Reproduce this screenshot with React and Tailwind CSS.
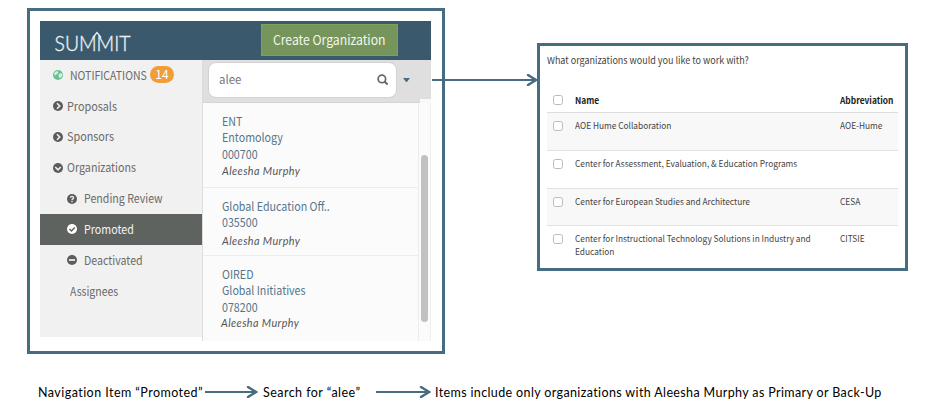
import React from "react";

const sans = "font-['Noto_Sans_CJK_SC','Noto_Sans',sans-serif]";
const caption = "font-['Lato','Liberation_Sans',sans-serif]";

function Disc({ color = "#5a5d5b", className = "", children }) {
  return (
    <svg viewBox="0 0 20 20" className={"size-[10px] shrink-0 " + className}>
      <circle cx="10" cy="10" r="10" fill={color} />
      {children}
    </svg>
  );
}

const chevronRight = <path d="M8 4.500l5.500 5.500-5.500 5.500" fill="none" stroke="#f1f1f1" strokeWidth="3.2" />;
const chevronDown = <path d="M4.500 8l5.500 5.500 5.500-5.500" fill="none" stroke="#f1f1f1" strokeWidth="3.2" />;

function Row({ icon, label, className = "", labelClass = "" }) {
  return (
    <div className={"flex h-[30.8px] items-center " + className}>
      {icon}
      <span className={"origin-left whitespace-nowrap pb-px " + labelClass}>{label}</span>
    </div>
  );
}

function Sidebar() {
  return (
    <nav className="h-[277px] w-[162px] shrink-0 bg-[#f1f1f1] text-[12px] leading-[16px] text-[#6a6a6a]">
      <div className="flex h-[30.8px] items-center pb-px pl-[13px]">
        <Disc color="#6abf93">
          <path d="M4 4l5-2 2 3-3 3-4 3-2-3zM12 8l5-2 2 4-3 5-3 1-2-4z" fill="#d6efe2" />
        </Disc>
        <span className="ml-[7px] w-[78px] origin-left scale-x-[0.875] whitespace-nowrap">NOTIFICATIONS</span>
        <span className="ml-[2px] flex h-[17px] w-[24px] items-center justify-center rounded-full bg-[#f19d38] text-[12px] text-white">
          <span className="pb-px">14</span>
        </span>
      </div>
      <Row icon={<Disc>{chevronRight}</Disc>} label="Proposals" className="pl-[13px]" labelClass="ml-[4px] scale-x-[0.9]" />
      <Row icon={<Disc>{chevronRight}</Disc>} label="Sponsors" className="pl-[13px]" labelClass="ml-[4px] scale-x-[0.9]" />
      <Row icon={<Disc>{chevronDown}</Disc>} label="Organizations" className="pl-[13px]" labelClass="ml-[4px] scale-x-[0.893]" />
      <Row
        icon={<Disc><path d="M6.8 7.500C7 3.800 13.200 4 13.200 7.300 13.200 9.800 10 9.600 10 12M10 13.600V16.400" fill="none" stroke="#f1f1f1" strokeWidth="2.6" /></Disc>}
        label="Pending Review" className="pl-[27px]" labelClass="ml-[7px] scale-x-[0.885]"
      />
      <Row
        icon={<Disc color="#ffffff"><path d="M5 10l4 4 6.500-7" fill="none" stroke="#5f6360" strokeWidth="3" /></Disc>}
        label="Promoted" className="bg-[#5f6360] pl-[27px] text-[#f4f4f4]" labelClass="ml-[7px] scale-x-[0.89]"
      />
      <Row
        icon={<Disc><path d="M4 10H16" stroke="#f1f1f1" strokeWidth="3.4" /></Disc>}
        label="Deactivated" className="pl-[27px]" labelClass="ml-[7px] scale-x-[0.885]"
      />
      <Row label="Assignees" className="pl-[30px] pt-px" labelClass="scale-x-[0.875]" />
    </nav>
  );
}

function Org({ lines, className, personClass = "" }) {
  return (
    <div className={"border-[#ededed] " + className}>
      {lines.map((l) => (
        <div key={l} className="h-[16.4px] whitespace-nowrap text-[12px] leading-[16.4px] text-[#55758a]">
          <span className="inline-block origin-left scale-x-[0.89]">{l}</span>
        </div>
      ))}
      <div className={"whitespace-nowrap font-['Lato','Liberation_Sans',sans-serif] text-[10.8px] italic leading-[16px] tracking-[0.4px] text-[#555] " + personClass}>
        Aleesha Murphy
      </div>
    </div>
  );
}

function SummitApp() {
  return (
    <div className="h-[346px] w-[418px] shrink-0 border-[3px] border-[#466c81] bg-white pl-[10px] pt-[10px]">
      <header className="flex h-[39px] w-[391px] items-center bg-[#3b596c]">
        <svg viewBox="0 0 90 30" className="ml-[8px] h-[30px] w-[90px] text-[#e8f0f4]">
          <text x="6.5" y="25" fontFamily="Lato" fontWeight="300" fontSize="21.5" fill="currentColor" stroke="currentColor" strokeWidth="0.4" textLength="76" lengthAdjust="spacingAndGlyphs">SUMMIT</text>
          <path d="M45 11.500L49 6.500L53 11.500" fill="none" stroke="currentColor" strokeWidth="1.4" />
        </svg>
        <button className="ml-[123px] mt-[-1px] flex h-[32px] w-[137px] items-center justify-center whitespace-nowrap border border-[#7f9f5c] bg-[#75955a] text-[13.5px] leading-[30px] text-[#f3f7ee]">
          <span className="scale-x-[0.905] pb-[2px]">Create Organization</span>
        </button>
      </header>
      <div className="flex">
        <Sidebar />
        <section className="w-[229px] border-l border-[#dcdcdc]">
          <div className="flex h-[43px] items-center border-b border-[#d4d4d4] bg-[#dfdfdf] pb-[2px]">
            <div className="ml-[5px] flex h-[36px] w-[189px] items-center justify-between rounded-[8px] border border-[#d2d2d2] bg-white pl-[10px] pr-[8px] text-[12px] text-[#777]">
              <span className="origin-left scale-x-[0.95] pb-[2px]">alee</span>
              <svg viewBox="0 0 20 20" className="size-[11.5px]"><circle cx="8.500" cy="8.500" r="6.500" fill="none" stroke="#666" strokeWidth="3" /><path d="M13 13l5.500 5.500" stroke="#666" strokeWidth="3.400" /></svg>
            </div>
            <svg viewBox="0 0 8 5" className="ml-[6px] h-[4.5px] w-[7px]"><path d="M0 0H8L4 5Z" fill="#466c81" /></svg>
            <span className="-mb-[3px] ml-[10px] h-[4px] w-[11px] shrink-0 self-end bg-[#f9f9f9]" />
          </div>
          <div className="flex h-[238px] bg-[#fbfbfb]">
            <div className="w-[216px] border-r border-[#ececec]">
              <Org lines={["ENT", "Entomology", "000700"]} className="h-[85px] border-b pl-[19px] pt-[10px]" personClass="mt-px" />
              <Org lines={["Global Education Off..", "035500"]} className="h-[68px] border-b pl-[19px] pt-[10px]" personClass="mt-[2px]" />
              <Org lines={["OIRED", "Global Initiatives", "078200"]} className="pl-[19px] pt-[10px]" personClass="-ml-px" />
            </div>
            <div className="flex w-[12px] justify-center border-r border-[#eee] pt-[52px]">
              <div className="h-[167px] w-[7px] rounded-full bg-[#c1c1c1]" />
            </div>
          </div>
        </section>
      </div>
    </div>
  );
}

const rows = [
  { name: "AOE Hume Collaboration", abbr: "AOE-Hume", bg: "bg-[#f8f8f8]" },
  { name: "Center for Assessment, Evaluation, & Education Programs", abbr: "", bg: "" },
  { name: "Center for European Studies and Architecture", abbr: "CESA", bg: "bg-[#f8f8f8]" },
  { name: "Center for Instructional Technology Solutions in Industry and Education", abbr: "CITSIE", bg: "" },
];

function Box() {
  return <span className="ml-[6px] mr-[12px] size-[10px] shrink-0 rounded-[2.5px] border border-[#bbb] bg-white" />;
}

function OrgTable() {
  return (
    <div className="mt-[35px] h-[228px] w-[371px] shrink-0 border-[3px] border-[#466c81] bg-white px-[7px] text-[9px] text-[#444]">
      <div className="mt-[7px] h-[15px] origin-left scale-x-[0.948] whitespace-nowrap text-[9.5px] leading-[15px]">What organizations would you like to work with?</div>
      <div className="mt-[26px] flex h-[19px] items-start border-b border-[#ddd] font-bold leading-[14px] text-[#222]">
        <span className="mt-px flex"><Box /></span>
        <span className="w-[264.5px]"><span className="inline-block origin-left scale-x-[0.93]">Name</span></span>
        <span className="origin-left scale-x-[0.93]">Abbreviation</span>
      </div>
      {rows.map((r, i) => (
        <div key={r.name} className={"flex h-[37.8px] items-start border-[#e2e2e2] pt-[7px] leading-[12.4px] " + r.bg + (i < 3 ? " border-b" : "")}>
          <span className="mt-[1px] flex"><Box /></span>
          <span className="w-[264.5px] origin-left scale-x-[0.925] pr-[4px]">{r.name}</span>
          <span className="origin-left scale-x-[0.925]">{r.abbr}</span>
        </div>
      ))}
    </div>
  );
}

function Arrow({ width, className = "" }) {
  return (
    <svg width={width} height="12" viewBox={`0 0 ${width} 12`} className={"shrink-0 " + className}>
      <path d={`M0 6H${width - 2}`} stroke="#466c81" strokeWidth="2" />
      <path d={`M${width - 10} 1L${width - 2} 6L${width - 10} 11`} fill="none" stroke="#466c81" strokeWidth="2.4" strokeLinecap="round" />
    </svg>
  );
}

export default function App() {
  return (
    <div className={"h-[420px] w-[936px] overflow-hidden bg-white pl-[27px] pt-[8px] " + sans}>
      <div className="flex h-[346px] items-start">
        <SummitApp />
        <Arrow width={106} className="relative -ml-[13px] -mr-px mt-[66px]" />
        <OrgTable />
      </div>
      <div className={"mt-[29px] flex h-[18px] items-center whitespace-nowrap pl-[11px] text-[12.5px] leading-[18px] text-black " + caption}>
        <span className="w-[167px] pt-px tracking-[0.45px]">Navigation Item “Promoted”</span>
        <Arrow width={53} />
        <span className="ml-[5px] w-[113px] pt-px tracking-[0.45px]">Search for “alee”</span>
        <Arrow width={55} />
        <span className="ml-[4px] pt-px tracking-[0.37px]">Items include only organizations with Aleesha Murphy as Primary or Back-Up</span>
      </div>
    </div>
  );
}
